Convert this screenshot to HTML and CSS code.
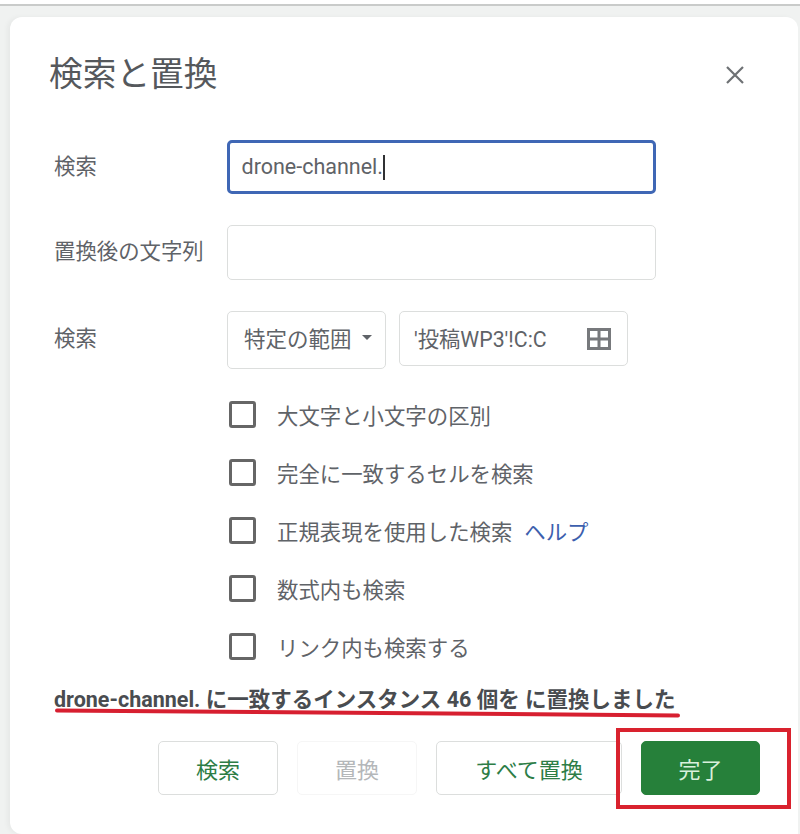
FILE: index.html
```html
<!DOCTYPE html>
<html lang="ja">
<head>
<meta charset="utf-8">
<title>検索と置換</title>
<link rel="stylesheet" href="styles.css">
</head>
<body>
<div class="topbar"></div>
<div class="backdrop">
  <main class="dialog">
    <header class="head">
      <h1 class="title">検索と置換</h1>
      <svg class="close" viewBox="0 0 18 18" width="18" height="18"><path d="M1 1 L17 17 M17 1 L1 17"/></svg>
    </header>
    <div class="row row-find">
      <label class="label">検索</label>
      <div class="field focused"><span>drone-channel.</span><i class="caret"></i></div>
    </div>
    <div class="row row-replace">
      <label class="label">置換後の文字列</label>
      <div class="field"></div>
    </div>
    <div class="row row-scope">
      <label class="label">検索</label>
      <div class="select">特定の範囲<i class="arrow"></i></div>
      <div class="range"><span>'投稿WP3'!C:C</span>
        <svg class="grid-icon" viewBox="0 0 24 22" width="24" height="22"><path d="M1.5 1.5H22.5V20.500H1.5Z M12 1.500V20.500 M1.500 11H22.500"/></svg>
      </div>
    </div>
    <ul class="checks">
      <li class="check"><i class="box"></i>大文字と小文字の区別</li>
      <li class="check"><i class="box"></i>完全に一致するセルを検索</li>
      <li class="check"><i class="box"></i>正規表現を使用した検索<a class="help">ヘルプ</a></li>
      <li class="check"><i class="box"></i>数式内も検索</li>
      <li class="check"><i class="box"></i>リンク内も検索する</li>
    </ul>
    <p class="message">drone-channel. に一致するインスタンス 46 個を に置換しました</p>
    <footer class="actions">
      <button class="btn">検索</button>
      <button class="btn disabled">置換</button>
      <button class="btn wide">すべて置換</button>
      <button class="btn primary">完了</button>
    </footer>
  </main>
</div>
<div class="mark-underline"></div>
<div class="mark-box"></div>
</body>
</html>
```
FILE: styles.css
```css
html, body { margin: 0; padding: 0; }
body {
  width: 800px; height: 834px; overflow: hidden; position: relative;
  background: #fff;
  font-family: Roboto, "Noto Sans CJK JP", sans-serif;
  color: #5f6368;
}
.topbar { height: 4px; background: #fff; border-bottom: 2px solid #c9cbca; }
.backdrop {
  height: 828px; padding: 11px 2px 0 10px; box-sizing: border-box;
  background: #f0f2f1;
}
.dialog {
  position: relative;
  height: 817px; box-sizing: border-box; background: #fff;
  border-radius: 12px 12px 0 12px;
  padding: 0 0 0 40px;
  box-shadow: -3px 0 5px rgba(0,0,0,.04);
}
.head { display: flex; justify-content: space-between; align-items: center; height: 123px; padding: 0 54px 0 0; }
.title { margin: 0 0 7px -1px; font-size: 33.700px; font-weight: 400; line-height: 1; color: #55585c; }
.close { stroke: #6e7174; stroke-width: 2.200; fill: none; margin-bottom: 7px; }
.row { display: flex; align-items: flex-start; }
.label { width: 173px; margin-left: 4px; margin-right: 0; flex: none; font-size: 21.400px; line-height: 54px; }
.row-find { height: 85px; }
.row-replace { height: 86px; }
.row-scope { height: 74px; gap: 13px; }
.row-scope .label { margin-right: -13px; }
.row-replace .label { line-height: 53px; }
.row-scope .label { line-height: 55px; }
.field {
  width: 429px; height: 55px; box-sizing: border-box;
  border: 1px solid #dcdedd; border-radius: 5px;
  padding: 0 14px; display: flex; align-items: center; font-size: 21.500px; line-height: 1;
}
.focused { height: 54px; border: 3px solid #3f67b5; border-radius: 5px; padding: 0 11.500px; }
.caret { width: 1.500px; height: 25px; background: #303134; margin-left: 0; }
.select {
  width: 159px; height: 58px; box-sizing: border-box; flex: none;
  border: 1px solid #dcdedd; border-radius: 5px;
  display: flex; align-items: center; padding: 0 0 6px 16px; font-size: 21.500px;
}
.arrow { width: 0; height: 0; margin-left: 10px; border: 5px solid transparent; border-top: 5px solid #5f6368; border-bottom: 0; }
.range {
  width: 229px; height: 55px; box-sizing: border-box; flex: none;
  border: 1px solid #dcdedd; border-radius: 5px;
  display: flex; align-items: center; justify-content: space-between;
  padding: 0 16px 0 14px; font-size: 21.300px;
}
.range span { margin-top: -2px; }
.grid-icon { stroke: #77797c; stroke-width: 3; fill: none; }
.checks { list-style: none; margin: 0; padding: 0 0 0 179px; }
.check { display: flex; align-items: center; height: 58px; font-size: 21.400px; }
.box { width: 27px; height: 27px; box-sizing: border-box; border: 3px solid #666; border-radius: 3px; margin-right: 21px; flex: none; }
.help { color: #3d5fae; margin-left: 12px; }
.message { margin: 0 0 0 4px; height: 66px; padding-top: 10px; box-sizing: border-box; font-size: 21.500px; font-weight: 700; color: #494c50; white-space: nowrap; line-height: 30px; }
.actions { display: flex; gap: 19px; margin-left: 108px; }
.btn {
  width: 120px; height: 54px; box-sizing: border-box;
  border: 1px solid #dcdedd; border-radius: 5px; background: #fff;
  color: #2d7d46; font: 400 22px Roboto, "Noto Sans CJK JP", sans-serif; padding: 0;
}
.disabled { color: #b4b7b9; border-color: #f6f6f6; }
.wide { width: 186px; }
.primary { width: 119px; background: #26803a; border-color: #26803a; color: #d9f0dc; }
.mark-underline {
  position: absolute; left: 55px; top: 711px; width: 625px; height: 4px;
  background: #d71f30; border-radius: 2px; transform: rotate(.45deg);
}
.mark-box {
  position: absolute; left: 616px; top: 728px; width: 175px; height: 81px;
  box-sizing: border-box; border: 4px solid #d9222e;
}
```
